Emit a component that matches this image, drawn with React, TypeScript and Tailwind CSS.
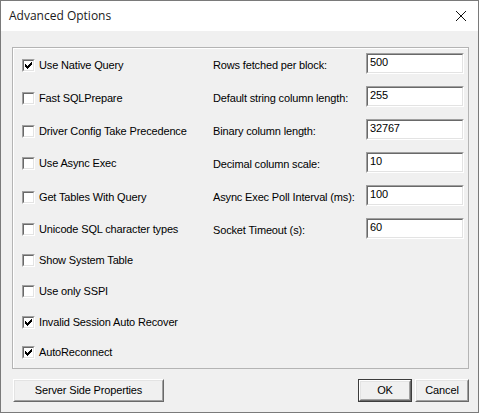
import React from "react";

const checks = [
  { label: "Use Native Query", checked: true, h: "h-[32px]" },
  { label: "Fast SQLPrepare", checked: false, h: "h-[34px]" },
  { label: "Driver Config Take Precedence", checked: false, h: "h-[32px]" },
  { label: "Use Async Exec", checked: false, h: "h-[32px]" },
  { label: "Get Tables With Query", checked: false, h: "h-[36px]" },
  { label: "Unicode SQL character types", checked: false, h: "h-[28px]" },
  { label: "Show System Table", checked: false, h: "h-[34px]" },
  { label: "Use only SSPI", checked: false, h: "h-[28px]" },
  { label: "Invalid Session Auto Recover", checked: true, h: "h-[34px]" },
  { label: "AutoReconnect", checked: true, h: "h-[26px]" },
];

const fields = [
  { label: "Rows fetched per block:", value: "500" },
  { label: "Default string column length:", value: "255" },
  { label: "Binary column length:", value: "32767" },
  { label: "Decimal column scale:", value: "10" },
  { label: "Async Exec Poll Interval (ms):", value: "100" },
  { label: "Socket Timeout (s):", value: "60" },
];

function CheckBox({ checked }: { checked: boolean }) {
  return (
    <div className="w-[13px] h-[13px] border border-t-[#a0a0a0] border-l-[#a0a0a0] border-r-white border-b-white">
      <div className="w-full h-full border border-t-[#696969] border-l-[#696969] border-r-[#e3e3e3] border-b-[#e3e3e3] bg-white flex items-center justify-center">
        {checked && (
          <svg width="9" height="9" viewBox="0 0 9 9" shapeRendering="crispEdges">
            <path
              d="M7 1h1v1h-1z M6 2h2v1h-2z M1 3h1v1h-1z M5 3h3v1h-3z M1 4h2v1h-2z M4 4h3v1h-3z M1 5h5v1h-5z M2 6h3v1h-3z M3 7h1v1h-1z"
              fill="#000"
            />
          </svg>
        )}
      </div>
    </div>
  );
}

function Sunken({ value }: { value: string }) {
  return (
    <div className="w-[98px] h-[21px] border border-t-[#a0a0a0] border-l-[#a0a0a0] border-r-white border-b-white">
      <div className="w-full h-full border border-t-[#696969] border-l-[#696969] border-r-[#e3e3e3] border-b-[#e3e3e3] bg-white pl-[2px] leading-[15px]">
        {value}
      </div>
    </div>
  );
}

function WinButton({
  children,
  width,
  isDefault = false,
}: {
  children: React.ReactNode;
  width: string;
  isDefault?: boolean;
}) {
  return (
    <div className={`${width} h-[23px] ${isDefault ? "border border-[#3c3c3c]" : ""}`}>
      <div className="w-full h-full border border-t-white border-l-white border-r-[#696969] border-b-[#696969]">
        <div className="w-full h-full border border-t-[#e3e3e3] border-l-[#e3e3e3] border-r-[#a0a0a0] border-b-[#a0a0a0] bg-[#f0f0f0] flex items-center justify-center">
          {children}
        </div>
      </div>
    </div>
  );
}

export default function App() {
  return (
    <div
      className="w-[479px] h-[413px] border border-[#7a7a7a] bg-[#f0f0f0] flex flex-col text-[11px] tracking-[-0.15px] text-black"
      style={{ fontFamily: '"Liberation Sans", Arial, sans-serif' }}
    >
      <div className="h-[30px] bg-white flex items-center justify-between pl-[8px] pr-[10px]">
        <span
          className="text-[12px] tracking-normal text-[#1a1a1a] pb-[1px]"
          style={{ fontFamily: '"Open Sans", "Noto Sans", sans-serif' }}
        >
          Advanced Options
        </span>
        <svg width="12" height="12" viewBox="0 0 12 12" className="mr-[1px]">
          <path d="M1 1L11 11M11 1L1 11" stroke="#111" strokeWidth="1" />
        </svg>
      </div>

      <div className="flex-1 flex flex-col pl-[11px]">
        <div className="mt-[16px] w-[457px] h-[322px] border border-[#b4b4b4] shadow-[inset_1px_1px_0_#fff] flex pl-[9px]">
          <div className="w-[191px] flex flex-col pt-[1px]">
            {checks.map((c) => (
              <div key={c.label} className={`${c.h} flex items-center gap-[4px]`}>
                <CheckBox checked={c.checked} />
                <span className="whitespace-nowrap">{c.label}</span>
              </div>
            ))}
          </div>
          <div className="flex flex-col gap-[12px] pt-[5px]">
            {fields.map((f) => (
              <div key={f.label} className="flex items-center h-[21px]">
                <span className="w-[153px] whitespace-nowrap pt-[3px]">{f.label}</span>
                <Sunken value={f.value} />
              </div>
            ))}
          </div>
        </div>

        <div className="mt-[10px] flex items-center justify-between pr-[9px] pl-[1px]">
          <WinButton width="w-[151px]">Server Side Properties</WinButton>
          <div className="flex gap-[3px]">
            <WinButton width="w-[54px]" isDefault>
              OK
            </WinButton>
            <WinButton width="w-[54px]">Cancel</WinButton>
          </div>
        </div>
      </div>
    </div>
  );
}
